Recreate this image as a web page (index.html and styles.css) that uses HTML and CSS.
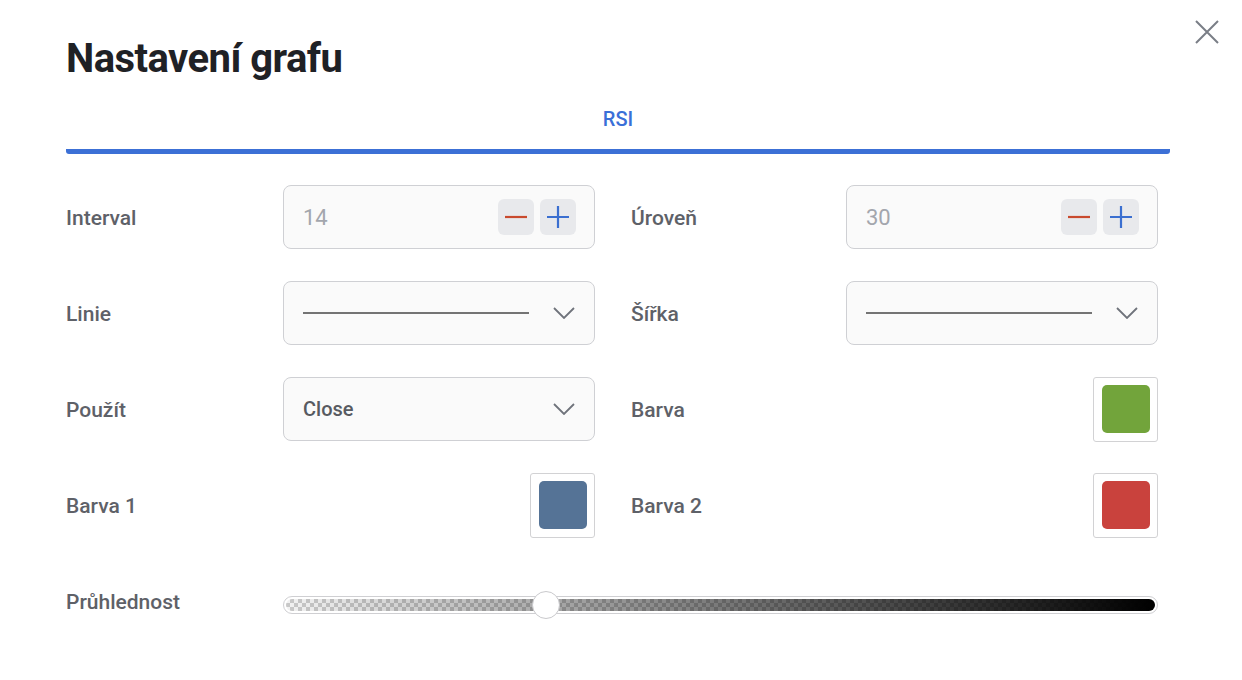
FILE: index.html
```html
<!DOCTYPE html>
<html lang="cs">
<head>
<meta charset="utf-8">
<title>Nastavení grafu</title>
<link rel="stylesheet" href="styles.css">
</head>
<body>
<div class="dialog">
  <h1 class="title">Nastavení grafu</h1>
  <button class="close" aria-label="Zavřít">
    <svg width="26" height="26" viewBox="0 0 26 26"><path d="M2 2 L24 24 M24 2 L2 24" stroke="#7a7e86" stroke-width="2" fill="none"/></svg>
  </button>

  <div class="tabs">
    <div class="tab active">RSI</div>
  </div>

  <div class="form">
    <div class="field">
      <div class="label">Interval</div>
      <div class="control input">
        <span class="value">14</span>
        <div class="steppers">
          <button class="step"><svg width="22" height="22" viewBox="0 0 22 22"><path d="M0 11 H22" stroke="#c94a2e" stroke-width="2.2"/></svg></button>
          <button class="step"><svg width="22" height="22" viewBox="0 0 22 22"><path d="M0 11 H22 M11 0 V22" stroke="#3b6fd0" stroke-width="2.2"/></svg></button>
        </div>
      </div>
    </div>
    <div class="field">
      <div class="label">Úroveň</div>
      <div class="control input">
        <span class="value">30</span>
        <div class="steppers">
          <button class="step"><svg width="22" height="22" viewBox="0 0 22 22"><path d="M0 11 H22" stroke="#c94a2e" stroke-width="2.2"/></svg></button>
          <button class="step"><svg width="22" height="22" viewBox="0 0 22 22"><path d="M0 11 H22 M11 0 V22" stroke="#3b6fd0" stroke-width="2.2"/></svg></button>
        </div>
      </div>
    </div>

    <div class="field">
      <div class="label">Linie</div>
      <div class="control select">
        <span class="line-sample"></span>
        <svg class="chev" width="22" height="12" viewBox="0 0 22 12"><path d="M1 1 L11 11 L21 1" stroke="#6f737b" stroke-width="1.8" fill="none"/></svg>
      </div>
    </div>
    <div class="field">
      <div class="label">Šířka</div>
      <div class="control select">
        <span class="line-sample"></span>
        <svg class="chev" width="22" height="12" viewBox="0 0 22 12"><path d="M1 1 L11 11 L21 1" stroke="#6f737b" stroke-width="1.8" fill="none"/></svg>
      </div>
    </div>

    <div class="field">
      <div class="label">Použít</div>
      <div class="control select">
        <span class="select-text">Close</span>
        <svg class="chev" width="22" height="12" viewBox="0 0 22 12"><path d="M1 1 L11 11 L21 1" stroke="#6f737b" stroke-width="1.8" fill="none"/></svg>
      </div>
    </div>
    <div class="field">
      <div class="label">Barva</div>
      <div class="control swatch-wrap">
        <div class="swatch"><span class="chip green"></span></div>
      </div>
    </div>

    <div class="field">
      <div class="label">Barva 1</div>
      <div class="control swatch-wrap">
        <div class="swatch"><span class="chip blue"></span></div>
      </div>
    </div>
    <div class="field">
      <div class="label">Barva 2</div>
      <div class="control swatch-wrap">
        <div class="swatch"><span class="chip red"></span></div>
      </div>
    </div>

    <div class="field wide">
      <div class="label">Průhlednost</div>
      <div class="slider">
        <div class="track"><div class="fill"></div></div>
        <div class="thumb" style="left: 30%"></div>
      </div>
    </div>
  </div>
</div>
</body>
</html>
```

FILE: styles.css
```css
* { box-sizing: border-box; }
html, body {
  margin: 0;
  padding: 0;
  background: #ffffff;
  font-family: Roboto, "Liberation Sans", Arial, sans-serif;
}
.dialog {
  position: relative;
  width: 1242px;
  height: 680px;
  padding: 34px 72px 0 66px;
}
.title {
  margin: 0;
  font-size: 40px;
  font-weight: 700;
  line-height: 50px;
  color: #1f2125;
  letter-spacing: -0.55px;
}
.close {
  position: absolute;
  top: 19px;
  right: 22px;
  width: 26px;
  height: 26px;
  padding: 0;
  border: 0;
  background: none;
  cursor: pointer;
}
.close svg { display: block; }
.tabs {
  margin-top: 21px;
  border-bottom: 5px solid #3c70d6;
  border-radius: 3px;
  display: flex;
  justify-content: center;
}
.tab {
  font-size: 20px;
  font-weight: 500;
  color: #3a6fd8;
  height: 44px;
  line-height: 28px;
}
.form {
  margin-top: 31px;
  display: grid;
  grid-template-columns: 529px 527px;
  column-gap: 36px;
  row-gap: 32px;
}
.field {
  display: flex;
  align-items: center;
  height: 64px;
}
.field.wide {
  grid-column: 1 / -1;
  height: 64px;
}
.label {
  flex: 1;
  padding-top: 2px;
  font-size: 21px;
  font-weight: 500;
  color: #5e6168;
}
.control {
  width: 312px;
  height: 64px;
  flex: none;
}
.input, .select {
  border: 1px solid #cfd0d4;
  border-radius: 8px;
  background: #fafafa;
  display: flex;
  align-items: center;
  padding: 0 18px 0 19px;
}
.value {
  flex: 1;
  font-size: 22px;
  color: #a3a6ad;
}
.steppers {
  display: flex;
  gap: 6px;
}
.step {
  width: 36px;
  height: 36px;
  border: 0;
  border-radius: 6px;
  background: #e8e9ec;
  padding: 0;
  display: flex;
  align-items: center;
  justify-content: center;
}
.step svg { display: block; }
.select { padding-right: 19px; }
.line-sample {
  width: 226px;
  height: 2px;
  background: #747474;
  margin-right: auto;
}
.select-text {
  font-size: 20px;
  font-weight: 500;
  color: #575a61;
  margin-right: auto;
}
.chev { display: block; }
.swatch-wrap {
  display: flex;
  justify-content: flex-end;
  align-items: center;
}
.swatch {
  width: 65px;
  height: 65px;
  border: 1px solid #d2d2d4;
  border-radius: 3px;
  background: #fff;
  display: flex;
  align-items: center;
  justify-content: center;
}
.chip {
  width: 48px;
  height: 48px;
  border-radius: 5px;
}
.chip.green { background: #72a43b; }
.chip.blue { background: #557396; }
.chip.red { background: #c9423d; }
.slider {
  position: relative;
  width: 875px;
  height: 30px;
  display: flex;
  align-items: center;
  margin-top: 8px;
}
.track {
  width: 100%;
  height: 18px;
  border: 1px solid #cfcfd2;
  border-radius: 9px;
  padding: 2px;
  background: #fff;
}
.fill {
  height: 100%;
  border-radius: 6px;
  background:
    linear-gradient(to right, rgba(0,0,0,0), rgba(0,0,0,1)),
    repeating-conic-gradient(#c8c8c8 0 25%, #f2f2f2 0 50%) 0 0 / 8px 8px;
}
.thumb {
  position: absolute;
  top: 1px;
  width: 28px;
  height: 28px;
  margin-left: -14px;
  border-radius: 50%;
  border: 1px solid #c9c9cc;
  background: #fff;
}
```
